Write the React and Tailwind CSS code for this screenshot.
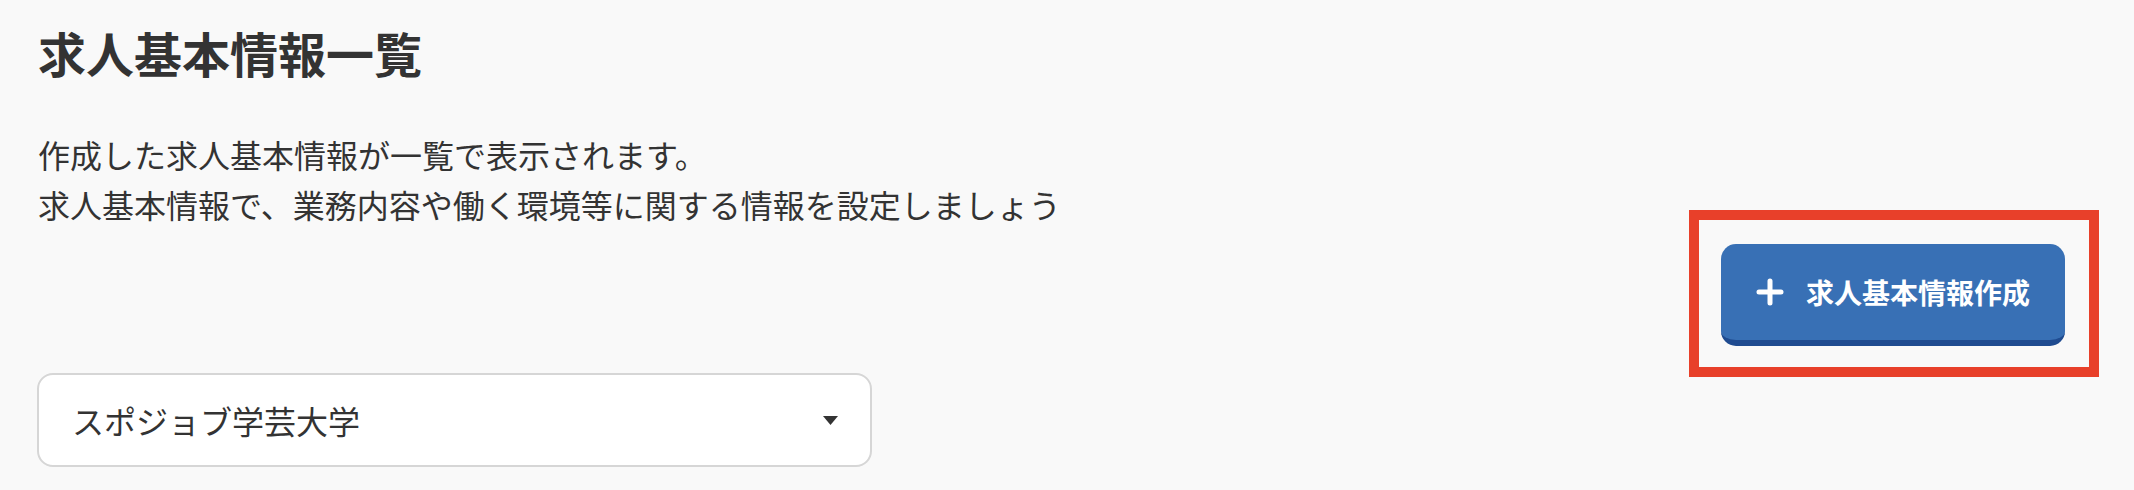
import React from 'react'

const FONT = { fontFamily: '"Noto Sans CJK JP", "Noto Sans", sans-serif' }

function PlusIcon() {
  return (
    <svg width="28" height="28" viewBox="0 0 28 28" fill="none">
      <path d="M14 3v22M3 14h22" stroke="white" strokeWidth="5" strokeLinecap="round" />
    </svg>
  )
}

export default function App() {
  return (
    <div
      className="min-h-[490px] w-full bg-[#f9f9f9] pl-[38px] pr-[69px] pt-[16px] text-[#333333] font-['Noto_Sans_CJK_JP','Noto_Sans',sans-serif]"
    >
      <h1 className="text-[48px] font-bold leading-[72px]">求人基本情報一覧</h1>

      <div className="mt-[41px] flex items-start justify-between">
        <p className="text-[32px] leading-[50px]">
          作成した求人基本情報が一覧で表示されます。
          <br />
          求人基本情報で、業務内容や働く環境等に関する情報を設定しましょう
        </p>

        <div className="relative mt-[115px]">
          <button className="flex h-[102px] w-[344px] items-center justify-center gap-[22px] rounded-[15px] border-b-[6px] border-[#1f4b90] bg-[#3870b5] pb-[0px] text-[28px] font-bold text-white">
            <PlusIcon />
            <span>求人基本情報作成</span>
          </button>
          {/* annotation frame */}
          <div className="pointer-events-none absolute left-[-32px] right-[-34px] top-[-34px] bottom-[-31px] border-[10px] border-[#e8402a]" />
        </div>
      </div>

      <div className="mt-[27px] flex h-[94px] w-[835px] items-center justify-between rounded-[16px] border-2 border-[#d6d6d6] bg-white pl-[33px] pr-[32px] ml-[-1px]">
        <span className="text-[32px]">スポジョブ学芸大学</span>
        <svg width="15" height="9" viewBox="0 0 15 9">
          <path d="M0 0h15L7.5 9z" fill="#333333" />
        </svg>
      </div>
    </div>
  )
}
